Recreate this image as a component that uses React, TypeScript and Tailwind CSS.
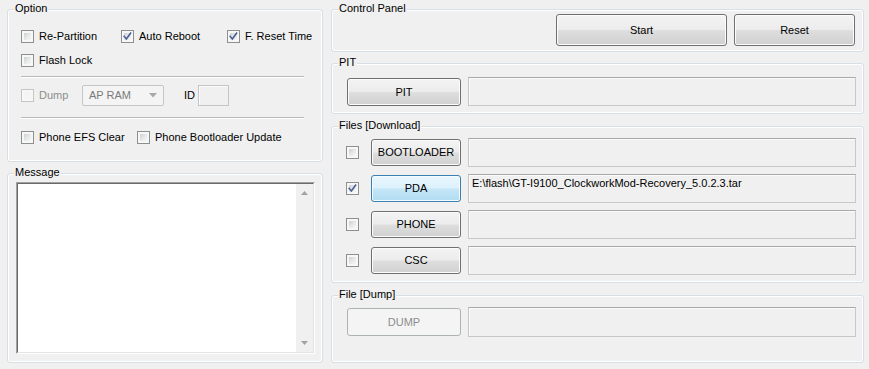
import React from 'react'

// Odin3-style flash tool window, Windows 7 classic-ish controls

type Variant = 'normal' | 'hot' | 'disabled'

function GroupBox({ label, className = '', children }: { label: string; className?: string; children?: React.ReactNode }) {
  return (
    <div className={`relative border border-[#d5dfe5] rounded-[3px] shadow-[inset_0_0_0_1px_#ffffff] ${className}`}>
      <span className="absolute top-[-8px] left-[6px] bg-[#f0f0f0] px-[1px] leading-[13px] text-black">{label}</span>
      {children}
    </div>
  )
}

function CheckBox({ checked = false, disabled = false }: { checked?: boolean; disabled?: boolean }) {
  return (
    <span
      className={`relative flex-shrink-0 w-[13px] h-[13px] border p-[2px] bg-[#f7f7f7] ${
        disabled ? 'border-[#c5c5c5]' : 'border-[#8e8f8f]'
      }`}
    >
      <span
        className={`block w-full h-full ${
          disabled
            ? 'bg-[#f4f4f4]'
            : 'bg-[linear-gradient(135deg,#cdd0d4_0%,#e6e7e8_50%,#f7f7f7_100%)]'
        }`}
      />
      {checked && (
        <svg className="absolute left-0 top-0" width="11" height="11" viewBox="0 0 11 11" fill="none">
          <path d="M2.2 5.4 L4.4 8 L8.6 2.2" stroke="#4a5f91" strokeWidth="1.6" strokeLinecap="square" />
        </svg>
      )}
    </span>
  )
}

function WinButton({ children, className = '', variant = 'normal' }: { children: React.ReactNode; className?: string; variant?: Variant }) {
  const styles: Record<Variant, string> = {
    normal:
      'border-[#707070] text-black bg-[linear-gradient(to_bottom,#f3f3f3_0%,#ececec_48%,#dedede_52%,#d0d0d0_100%)] shadow-[inset_0_0_0_1px_#fcfcfc]',
    hot: 'border-[#3c7fb1] text-black bg-[linear-gradient(to_bottom,#eaf6fd_0%,#dcf1fc_48%,#c4e6f7_52%,#b2dcf2_100%)] shadow-[inset_0_0_0_1px_#f4fbff]',
    disabled: 'border-[#adb2b5] text-[#8d8d8d] bg-[#f4f4f4]',
  }
  return (
    <div className={`flex-shrink-0 flex items-center justify-center border rounded-[3px] ${styles[variant]} ${className}`}>
      {children}
    </div>
  )
}

function TextField({ value = '', className = '' }: { value?: string; className?: string }) {
  return (
    <div
      className={`flex-shrink-0 border border-[#c7c7c7] border-t-[#a8a8a8] bg-[#f0f0f0] shadow-[inset_1px_1px_0_#fbfbfb] pl-[3px] pt-[2px] leading-[13px] text-black whitespace-nowrap overflow-hidden ${className}`}
    >
      {value}
    </div>
  )
}

function Separator() {
  return (
    <div className="w-[283px]">
      <div className="h-[1px] bg-[#b9b9b9]" />
      <div className="h-[1px] bg-[#ffffff]" />
    </div>
  )
}

const files = [
  { name: 'BOOTLOADER', checked: false, value: '' },
  { name: 'PDA', checked: true, value: 'E:\\flash\\GT-I9100_ClockworkMod-Recovery_5.0.2.3.tar' },
  { name: 'PHONE', checked: false, value: '' },
  { name: 'CSC', checked: false, value: '' },
]

export default function App() {
  return (
    <div className="w-[869px] h-[369px] bg-[#f0f0f0] flex gap-[8px] pl-[7px] pt-[9px] text-[11px] leading-[13px] text-black font-['Liberation_Sans',Arial,sans-serif] select-none overflow-hidden">
      {/* left column */}
      <div className="w-[316px] flex flex-col">
        <GroupBox label="Option" className="h-[153px]">
          <div className="flex flex-col pl-[13px] pt-[20px]">
            <div className="flex items-center h-[13px]">
              <label className="w-[100px] flex items-center gap-[5px]">
                <CheckBox />
                <span>Re-Partition</span>
              </label>
              <label className="w-[106px] flex items-center gap-[5px]">
                <CheckBox checked />
                <span>Auto Reboot</span>
              </label>
              <label className="flex items-center gap-[5px]">
                <CheckBox checked />
                <span>F. Reset Time</span>
              </label>
            </div>
            <div className="flex items-center h-[13px] mt-[11px]">
              <label className="flex items-center gap-[5px]">
                <CheckBox />
                <span>Flash Lock</span>
              </label>
            </div>
            <div className="mt-[9px]">
              <Separator />
            </div>
            <div className="flex items-center h-[21px] mt-[7px]">
              <label className="w-[61px] flex items-center gap-[5px]">
                <CheckBox disabled />
                <span className="text-[#8d8d8d]">Dump</span>
              </label>
              <div className="w-[82px] h-[21px] flex items-center justify-between border border-[#c5c5c5] rounded-[2px] bg-[#f4f4f4] pl-[6px] pr-[6px]">
                <span className="text-[#7a7a7a]">AP RAM</span>
                <svg width="8" height="5" viewBox="0 0 8 5">
                  <path d="M0 0 H8 L4 4.5 Z" fill="#a8a8a8" />
                </svg>
              </div>
              <span className="ml-[20px] w-[14px]">ID</span>
              <div className="w-[31px] h-[21px] border border-[#c5c5c5] bg-[#f0f0f0] shadow-[inset_1px_1px_0_#fbfbfb]" />
            </div>
            <div className="mt-[11px]">
              <Separator />
            </div>
            <div className="flex items-center h-[13px] mt-[12px]">
              <label className="w-[116px] flex items-center gap-[5px]">
                <CheckBox />
                <span>Phone EFS Clear</span>
              </label>
              <label className="flex items-center gap-[5px]">
                <CheckBox />
                <span>Phone Bootloader Update</span>
              </label>
            </div>
          </div>
        </GroupBox>

        <GroupBox label="Message" className="h-[190px] mt-[11px]">
          <div className="p-[8px]">
            <div className="w-[299px] h-[172px] border border-[#a0a0a0] border-r-[#ffffff] border-b-[#ffffff]">
              <div className="w-full h-full flex border border-[#696969] border-r-[#e3e3e3] border-b-[#e3e3e3] bg-white">
                <div className="flex-1" />
                <div className="w-[17px] flex flex-col items-center justify-between bg-[#f0f0f0] py-[7px]">
                  <svg width="7" height="4" viewBox="0 0 7 4">
                    <path d="M0 4 L3.5 0 L7 4 Z" fill="#a3a3a3" />
                  </svg>
                  <svg width="7" height="4" viewBox="0 0 7 4">
                    <path d="M0 0 L3.5 4 L7 0 Z" fill="#a3a3a3" />
                  </svg>
                </div>
              </div>
            </div>
          </div>
        </GroupBox>
      </div>

      {/* right column */}
      <div className="w-[533px] flex flex-col">
        <GroupBox label="Control Panel" className="h-[43px]">
          <div className="flex justify-end gap-[7px] pt-[4px] pr-[8px]">
            <WinButton className="w-[171px] h-[32px]">Start</WinButton>
            <WinButton className="w-[121px] h-[32px]">Reset</WinButton>
          </div>
        </GroupBox>

        <GroupBox label="PIT" className="h-[51px] mt-[11px]">
          <div className="flex gap-[7px] pl-[15px] pt-[13px]">
            <WinButton className="w-[114px] h-[28px] mt-[1px]">PIT</WinButton>
            <TextField className="w-[388px] h-[29px]" />
          </div>
        </GroupBox>

        <GroupBox label="Files [Download]" className="h-[157px] mt-[12px]">
          <div className="flex flex-col gap-[7px] pl-[14px] pt-[11px]">
            {files.map((f) => (
              <div key={f.name} className="flex items-center h-[29px]">
                <CheckBox checked={f.checked} />
                <WinButton variant={f.name === 'PDA' ? 'hot' : 'normal'} className="w-[90px] h-[27px] ml-[12px]">
                  {f.name}
                </WinButton>
                <TextField value={f.value} className="w-[388px] h-[29px] ml-[7px]" />
              </div>
            ))}
          </div>
        </GroupBox>

        <GroupBox label="File [Dump]" className="h-[68px] mt-[12px]">
          <div className="flex gap-[7px] pl-[15px] pt-[11px]">
            <WinButton variant="disabled" className="w-[114px] h-[28px] mt-[1px]">
              DUMP
            </WinButton>
            <TextField className="w-[388px] h-[30px]" />
          </div>
        </GroupBox>
      </div>
    </div>
  )
}
